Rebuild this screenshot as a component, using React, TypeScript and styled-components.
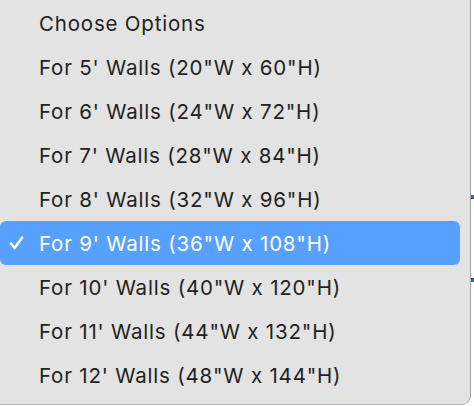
import React from "react";
import styled, { createGlobalStyle } from "styled-components";

const Global = createGlobalStyle`
  html, body { margin: 0; padding: 0; background: #ffffff; }
  body { font-family: Inter, "Noto Sans", "DejaVu Sans", sans-serif; }
`;

const Screen = styled.div`
  display: flex;
  height: 406px;
  width: 474px;
  overflow: hidden;
  background: #ffffff;
`;

const Panel = styled.div`
  flex: none;
  box-sizing: border-box;
  width: 481px;
  margin-left: -10px;
  margin-top: -20px;
  height: 425px;
  padding: 21px 10px 0 10px;
  background: #e3e3e3;
  border-right: 1px solid #a3a3a3;
  border-bottom: 1px solid #b9b9b9;
  border-radius: 0 0 9px 0;
  display: flex;
  flex-direction: column;
`;

const Row = styled.div<{ $selected?: boolean }>`
  display: flex;
  align-items: center;
  height: 44px;
  flex: none;
  border-radius: 6px;
  background: ${(p) => (p.$selected ? "#58a0fe" : "transparent")};
  color: ${(p) => (p.$selected ? "#ffffff" : "#222222")};
  font-size: 20.5px;
  letter-spacing: 0.8px;
  white-space: nowrap;
`;

const Lead = styled.span`
  flex: none;
  width: 39px;
  display: flex;
  align-items: center;
`;

const Check = styled.svg`
  margin-left: 9px;
  width: 15px;
  height: 14px;
`;

const Strip = styled.div`
  flex: 1;
  display: flex;
  flex-direction: column;
`;

const Line = styled.div<{ $c: string; $h: number; $top?: number }>`
  height: ${(p) => p.$h}px;
  margin-top: ${(p) => p.$top ?? 0}px;
  background: ${(p) => p.$c};
`;

const options = [
  "Choose Options",
  "For 5' Walls (20\"W x 60\"H)",
  "For 6' Walls (24\"W x 72\"H)",
  "For 7' Walls (28\"W x 84\"H)",
  "For 8' Walls (32\"W x 96\"H)",
  "For 9' Walls (36\"W x 108\"H)",
  "For 10' Walls (40\"W x 120\"H)",
  "For 11' Walls (44\"W x 132\"H)",
  "For 12' Walls (48\"W x 144\"H)",
];

export default function App() {
  return (
    <>
      <Global />
      <Screen>
        <Panel>
          {options.map((o, i) => (
            <Row key={o} $selected={i === 5}>
              <Lead>
                {i === 5 && (
                  <Check viewBox="0 0 15 14">
                    <path
                      d="M2 7.5 L5.6 12 L13.2 1.6"
                      fill="none"
                      stroke="#ffffff"
                      strokeWidth="2.5"
                      strokeLinecap="round"
                      strokeLinejoin="round"
                    />
                  </Check>
                )}
              </Lead>
              {o}
            </Row>
          ))}
        </Panel>
        <Strip>
          <Line $c="#1d6fe6" $h={3} $top={195} />
          <Line $c="#444444" $h={1} />
          <Line $c="#444444" $h={1} $top={79} />
          <Line $c="#1d6fe6" $h={3} />
        </Strip>
      </Screen>
    </>
  );
}
